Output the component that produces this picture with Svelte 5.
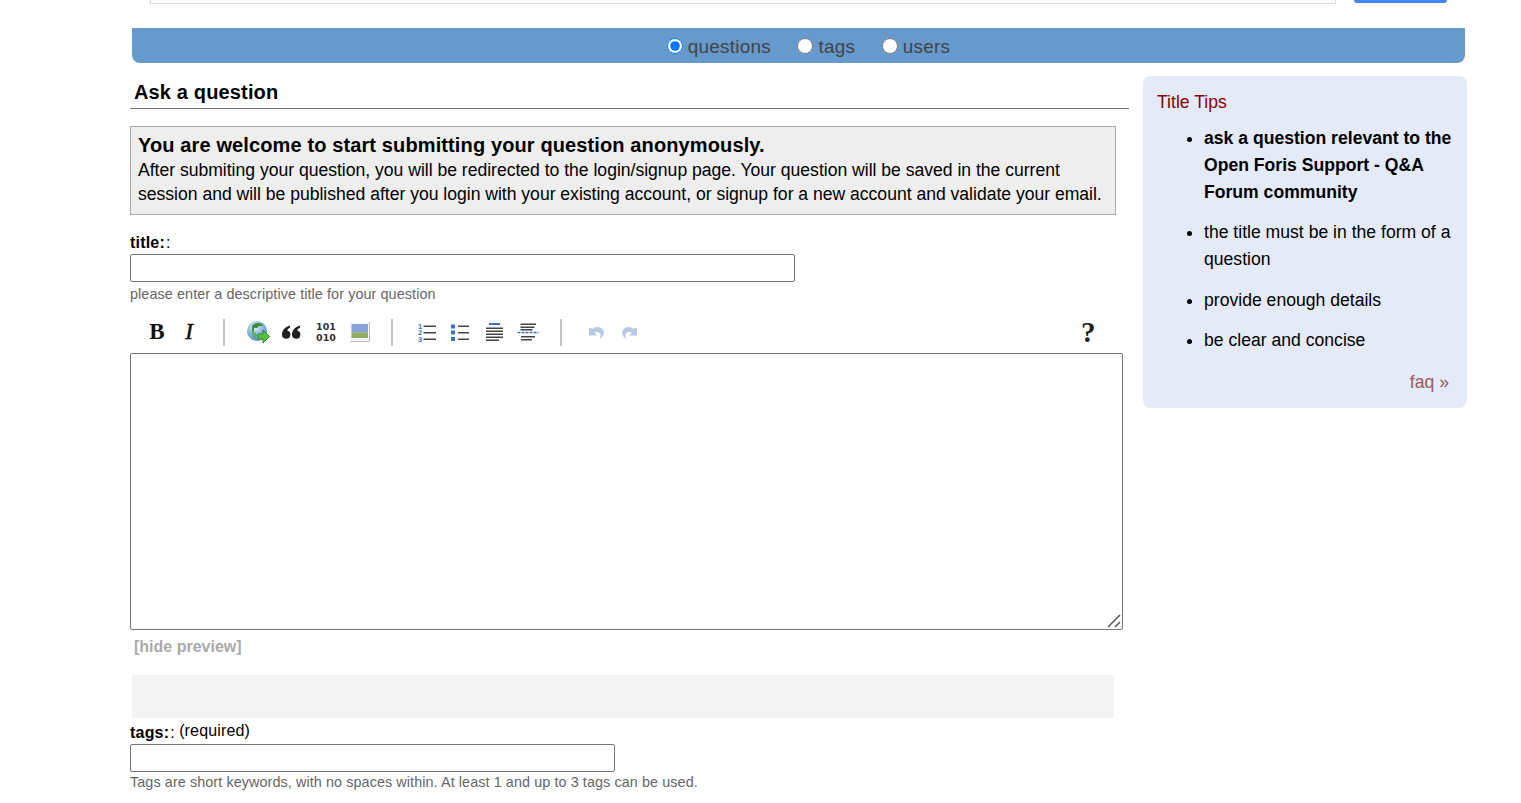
<script>
  const tips = [
    { text: 'ask a question relevant to the Open Foris Support - Q&A Forum community', strong: true },
    { text: 'the title must be in the form of a question' },
    { text: 'provide enough details' },
    { text: 'be clear and concise' }
  ];
</script>

<div class="page">
  <div class="topbar">
    <div class="search"></div>
    <div class="go"></div>
  </div>
  <div class="scope">
    <label><input type="radio" name="scope" checked />questions</label>
    <label><input type="radio" name="scope" />tags</label>
    <label><input type="radio" name="scope" />users</label>
  </div>
  <div class="columns">
    <main>
      <h1>Ask a question</h1>
      <div class="notice">
        <h2>You are welcome to start submitting your question anonymously.</h2>
        <p>After submiting your question, you will be redirected to the login/signup page. Your question will be saved in the current session and will be published after you login with your existing account, or signup for a new account and validate your email.</p>
      </div>
      <div class="label first"><b>title:</b><i>:</i></div>
      <input class="title" type="text" />
      <div class="hint">please enter a descriptive title for your question</div>
      <div class="toolbar">
        <span class="tb">B</span>
        <span class="ti">I</span>
        <span class="sep s1"></span>
        <svg class="ic globe" viewBox="0 0 24 24">
          <defs>
            <radialGradient id="sea" cx=".4" cy=".3" r=".8">
              <stop offset="0" stop-color="#e4f0fa" />
              <stop offset=".55" stop-color="#7fb2de" />
              <stop offset="1" stop-color="#4f86bd" />
            </radialGradient>
          </defs>
          <circle cx="11" cy="11" r="10" fill="url(#sea)" />
          <path d="M6 6c2-3 6-4 10-2l1 2-4 0-2 2-3 0 0 3-2 1z" fill="#3f8f3a" />
          <path d="M5 11l4 1 2 3-1 4-3-2z" fill="#5aa548" opacity=".8" />
          <path d="M12 14h5v-4l6.500 6.500-6.500 6.500v-4h-5z" fill="#56c23c" stroke="#2d8a2a" />
        </svg>
        <svg class="ic quote" viewBox="0 0 20 20">
          <path d="M9 3.500C5 4.500 1 7.500 1 12.500a4.200 4.200 0 1 0 5.200-4c.2-1.200 1.300-2.300 2.800-2.800zM19 3.500c-4 1-8 4-8 9a4.200 4.200 0 1 0 5.200-4c.2-1.200 1.300-2.300 2.800-2.800z" fill="#222" />
        </svg>
        <svg class="ic bin" viewBox="0 0 22 22">
          <text x="11" y="9">101</text>
          <text x="11" y="20">010</text>
        </svg>
        <svg class="ic pic" viewBox="0 0 20 20">
          <rect x="0" y="0" width="20" height="20" fill="#f6f6f6" />
          <path d="M19.500 0v19.500H0" fill="none" stroke="#bbb" />
          <rect x="1.500" y="2" width="16.500" height="8.500" fill="#86a4d8" />
          <rect x="1.500" y="10.500" width="16.500" height="5.500" fill="#8db060" />
        </svg>
        <span class="sep s2"></span>
        <svg class="ic ol" viewBox="0 0 20 20">
          <g class="nums"><text x="3" y="6.500">1</text><text x="3" y="13">2</text><text x="3" y="19.500">3</text></g>
          <g fill="#444"><rect x="6.500" y="3.500" width="12.500" height="1.500" /><rect x="6.500" y="10" width="12.500" height="1.500" /><rect x="6.500" y="16.500" width="12.500" height="1.500" /></g>
        </svg>
        <svg class="ic ul" viewBox="0 0 20 20">
          <g fill="#3f6fc4"><rect x="1" y="2.500" width="4" height="4" /><rect x="1" y="8.500" width="4" height="4" /><rect x="1" y="15" width="4" height="4" /></g>
          <g fill="#444"><rect x="8" y="3.500" width="11" height="1.500" /><rect x="8" y="10" width="11" height="1.500" /><rect x="8" y="16.500" width="11" height="1.500" /></g>
        </svg>
        <svg class="ic align" viewBox="0 0 20 20">
          <rect x="5" y="1" width="11" height="2" fill="#3f6fc4" />
          <g fill="#444"><rect x="2" y="5.500" width="17" height="1.500" /><rect x="2" y="8.500" width="17" height="1.500" /><rect x="2" y="11.500" width="17" height="1.500" /><rect x="2" y="14.500" width="17" height="1.500" /><rect x="2" y="17.500" width="13" height="1.500" /></g>
        </svg>
        <svg class="ic rule" viewBox="0 0 22 20">
          <g fill="#444"><rect x="3.500" y="1.500" width="15.500" height="1.500" /><rect x="3.500" y="4.500" width="14" height="1.500" /><rect x="3.500" y="7" width="12" height="1.500" /><rect x="4" y="14" width="14" height="1.500" /><rect x="4" y="17" width="11" height="1.500" /></g>
          <path d="M.5 10.500h21" stroke="#3f6fc4" stroke-width="1.300" stroke-dasharray="3 1" />
        </svg>
        <span class="sep s3"></span>
        <svg class="ic undo" viewBox="0 0 20 20">
          <path d="M2 5.500v8h8l-2.700-2.700c2-1.500 5-1 6 1 .5 1 .3 3-1 5.200 4-1.500 5.700-6 3.700-9.200-2.500-3.300-7-3.800-10.200-1.100z" fill="#b9c9e4" />
        </svg>
        <svg class="ic redo" viewBox="0 0 20 20">
          <path d="M18 5.500v8h-8l2.700-2.700c-2-1.500-5-1-6 1-.5 1-.3 3 1 5.200-4-1.500-5.700-6-3.700-9.200 2.500-3.300 7-3.800 10.200-1.100z" fill="#b9c9e4" />
        </svg>
        <span class="help">?</span>
      </div>
      <div class="editor">
        <textarea></textarea>
        <svg class="grip" viewBox="0 0 14 14">
          <path d="M1 13L13 1M8 13l5-5" fill="none" stroke="#555" stroke-width="1.500" />
        </svg>
      </div>
      <div class="toggle">[hide preview]</div>
      <div class="preview"></div>
      <div class="label tags"><b>tags:</b><i>:</i> <span>(required)</span></div>
      <input class="tagsinput" type="text" />
      <div class="hint tagshint">Tags are short keywords, with no spaces within. At least 1 and up to 3 tags can be used.</div>
    </main>
    <aside>
      <h3>Title Tips</h3>
      <ul>
        {#each tips as tip}
          <li class:strong={tip.strong}>{tip.text}</li>
        {/each}
      </ul>
      <div class="faq">faq »</div>
    </aside>
  </div>
</div>

<style>
  :global(body) {
    margin: 0;
    background: #fff;
    font-family: "Liberation Sans", Arial, sans-serif;
  }
  .page {
    width: 1521px;
    height: 803px;
    overflow: hidden;
    box-sizing: border-box;
    padding-left: 130px;
    color: #000;
  }
  .topbar {
    height: 4px;
    display: flex;
    align-items: flex-end;
    padding-left: 20px;
    overflow: hidden;
  }
  .search {
    width: 1186px;
    height: 30px;
    box-sizing: border-box;
    border: 1px solid #ddd;
    flex: none;
  }
  .go {
    width: 93px;
    height: 30px;
    margin-left: 18px;
    margin-bottom: 1px;
    background: #4285f4;
    border-radius: 3px;
    flex: none;
  }
  .scope {
    margin: 24px 0 0 2px;
    width: 1333px;
    height: 35px;
    background: #6699cc;
    border-radius: 0 0 8px 8px;
    display: flex;
    justify-content: center;
    align-items: center;
    gap: 26.5px;
    font-size: 19px;
    letter-spacing: .22px;
    color: #444;
    padding: 2px 0 0 20px;
    box-sizing: border-box;
  }
  .scope label {
    display: flex;
    align-items: center;
  }
  .scope input {
    width: 16px;
    height: 16px;
    margin: 0 5px 1px 0;
  }
  .columns {
    display: flex;
    align-items: flex-start;
  }
  main {
    width: 1013px;
    flex: none;
  }
  h1 {
    width: 999px;
    box-sizing: border-box;
    margin: 0;
    padding: 17px 0 3px 4px;
    font-size: 20px;
    line-height: 25px;
    height: 46px;
    font-weight: bold;
    letter-spacing: .15px;
    border-bottom: 1px solid #777;
  }
  .notice {
    margin-top: 17px;
    width: 986px;
    height: 89px;
    box-sizing: border-box;
    background: #eee;
    border: 1px solid #aaa;
    padding: 6px 7px 0;
    overflow: hidden;
  }
  .notice h2 {
    margin: 0;
    font-size: 20px;
    line-height: 25px;
    letter-spacing: .12px;
    font-weight: bold;
  }
  .notice p {
    margin: 0;
    font-size: 17.6px;
    line-height: 24px;
    letter-spacing: -.02px;
  }
  .label {
    font-size: 16px;
    line-height: 19px;
  }
  .label.first {
    margin-top: 18px;
  }
  .label b {
    font-weight: bold;
    letter-spacing: .2px;
  }
  .label i {
    font-style: normal;
    margin-left: 1px;
  }
  .label span {
    position: relative;
    top: -2px;
    letter-spacing: .15px;
  }
  input[type="text"] {
    display: block;
    box-sizing: border-box;
    margin: 0;
    background: #fff;
    border: 1px solid #767676;
    border-radius: 2px;
    height: 28px;
    padding: 0;
  }
  .title {
    width: 665px;
    margin-top: 2px !important;
  }
  .tagsinput {
    width: 485px;
  }
  .hint {
    font-size: 14.4px;
    line-height: 18px;
    letter-spacing: .08px;
    margin-top: 3px;
    color: #666;
  }
  .tagshint {
    margin-top: 1px;
  }
  .toolbar {
    height: 50px;
    width: 993px;
    display: flex;
    align-items: center;
    position: relative;
    padding-top: 8px;
    box-sizing: border-box;
  }
  .ic {
    width: 20px;
    height: 20px;
    flex: none;
  }
  .tb, .ti {
    font-family: "Liberation Serif", serif;
    font-size: 23px;
    line-height: 24px;
    font-weight: bold;
    color: #111;
    width: 20px;
    flex: none;
    text-align: center;
  }
  .tb { margin-left: 17px; }
  .ti {
    margin-left: 12px;
    font-style: italic;
    font-weight: normal;
    -webkit-text-stroke: .5px #111;
  }
  .globe { width: 24px; height: 24px; margin-left: 21px; }
  .quote { margin-left: 11px; }
  .bin { width: 22px; height: 22px; margin-left: 14px; }
  .pic { margin-left: 13px; }
  .ol { margin-left: 24px; }
  .ul { margin-left: 13px; }
  .align { margin-left: 14px; }
  .rule { width: 22px; margin-left: 13px; }
  .undo { margin-left: 25px; }
  .redo { margin-left: 12px; }
  .bin text {
    font-family: "DejaVu Sans", sans-serif;
    font-size: 9.5px;
    font-weight: bold;
    fill: #333;
    text-anchor: middle;
  }
  .nums text {
    font-family: "Liberation Sans", sans-serif;
    font-size: 7.5px;
    font-weight: bold;
    fill: #3f6fc4;
    text-anchor: middle;
  }
  .sep {
    width: 2px;
    height: 27px;
    background: #c4c4c4;
    flex: none;
  }
  .s1 { margin-left: 24px; }
  .s2 { margin-left: 21px; }
  .s3 { margin-left: 21px; }
  .help {
    position: absolute;
    left: 951px;
    top: 15px;
    font-family: "Liberation Serif", serif;
    font-size: 29px;
    line-height: 29px;
    font-weight: bold;
    color: #222;
  }
  .editor {
    position: relative;
    width: 993px;
    height: 277px;
  }
  textarea {
    display: block;
    width: 993px;
    height: 277px;
    margin: 0;
    padding: 0;
    box-sizing: border-box;
    border: 1px solid #767676;
    border-radius: 2px;
    background: #fff;
    resize: none;
  }
  .grip {
    position: absolute;
    right: 2px;
    bottom: 2px;
    width: 14px;
    height: 14px;
  }
  .toggle {
    margin: 7px 0 0 4px;
    font-size: 16px;
    line-height: 19px;
    font-weight: bold;
    color: #aaa;
  }
  .preview {
    margin: 19px 0 0 2px;
    width: 982px;
    height: 43px;
    background: #f4f4f4;
  }
  .label.tags {
    margin-top: 4px;
    line-height: 22px;
    height: 22px;
  }
  aside {
    margin: 13px 0 0;
    width: 324px;
    height: 332px;
    box-sizing: border-box;
    background: #e4eaf8;
    border-radius: 8px;
    padding: 14px 8px 0 14px;
    flex: none;
  }
  h3 {
    margin: 0;
    font-size: 17.6px;
    line-height: 24px;
    font-weight: normal;
    color: #8b0000;
  }
  ul {
    margin: 11px 0 0;
    padding: 0 0 0 47px;
    font-size: 17.6px;
    line-height: 27px;
  }
  li {
    margin-bottom: 14px;
  }
  li.strong {
    font-weight: bold;
    margin-bottom: 13px;
  }
  li:nth-child(3) {
    margin-bottom: 13px;
  }
  .faq {
    margin-top: 16px;
    padding-right: 10px;
    text-align: right;
    font-size: 17.6px;
    line-height: 24px;
    color: #985a5a;
  }
</style>
